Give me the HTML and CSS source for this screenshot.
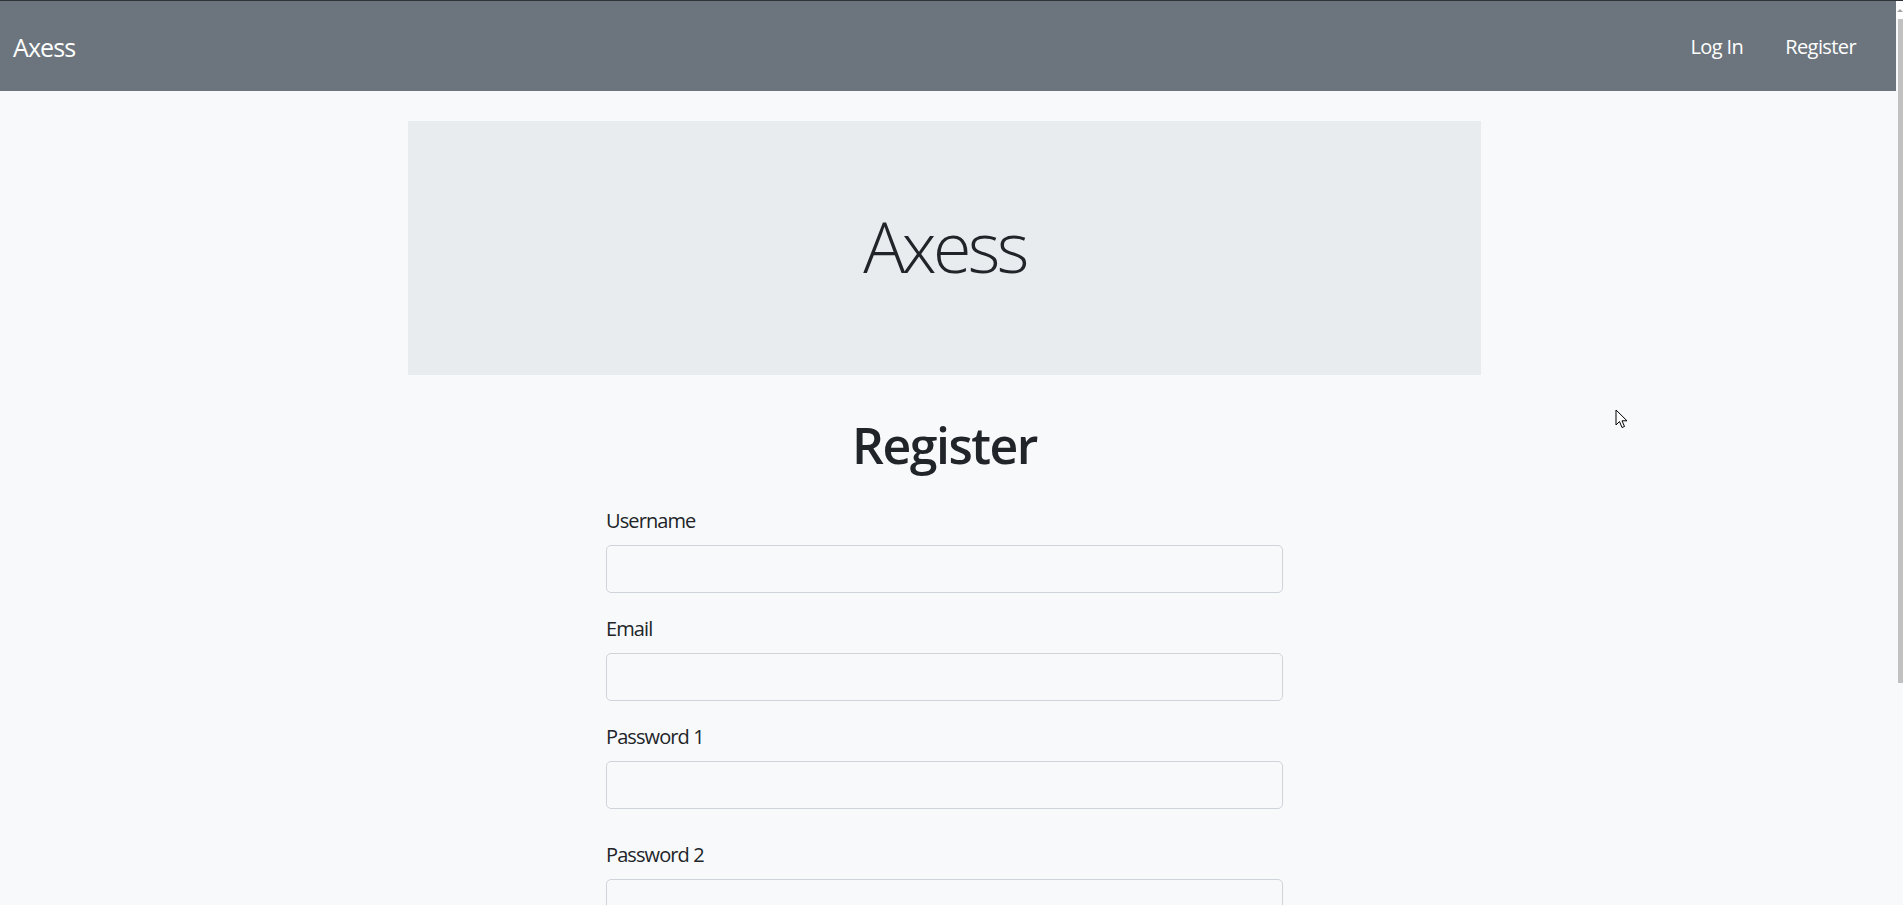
FILE: index.html
```html
<!DOCTYPE html>
<html lang="en">
<head>
<meta charset="utf-8">
<title>Axess - Register</title>
<link rel="stylesheet" href="styles.css">
</head>
<body>
<div class="page">
  <nav class="navbar">
    <a class="brand" href="#">Axess</a>
    <ul class="nav">
      <li><a class="nav-link" href="#">Log In</a></li>
      <li><a class="nav-link" href="#">Register</a></li>
    </ul>
  </nav>
  <main class="main">
    <div class="jumbotron">
      <h1 class="display">Axess</h1>
    </div>
    <section class="register">
      <h1 class="title">Register</h1>
      <form class="form">
        <div class="form-group">
          <label for="username">Username</label>
          <input id="username" class="form-control" type="text">
        </div>
        <div class="form-group">
          <label for="email">Email</label>
          <input id="email" class="form-control" type="email">
        </div>
        <div class="form-group form-group-help">
          <label for="password1">Password 1</label>
          <input id="password1" class="form-control" type="password">
        </div>
        <div class="form-group">
          <label for="password2">Password 2</label>
          <input id="password2" class="form-control" type="password">
        </div>
      </form>
    </section>
    <svg class="cursor" width="14" height="22" viewBox="0 0 14 22" aria-hidden="true">
      <path d="M1 1 L1 16 L4.5 12.5 L7 18.5 L9.5 17.5 L7 11.8 L12 11.8 Z" fill="#fff" stroke="#000" stroke-width="1" stroke-linejoin="miter"/>
    </svg>
  </main>
</div>
<div class="scrollbar">
  <div class="scroll-cap"><span class="scroll-arrow"></span></div>
  <div class="scroll-thumb"></div>
</div>
</body>
</html>
```

FILE: styles.css
```css
html, body {
  margin: 0;
  padding: 0;
}

html {
  height: 905px;
  overflow: hidden;
}

body {
  height: 904px;
  overflow: hidden;
  display: flex;
  border-top: 1px solid #2f3439;
  background: #f8f9fa;
  color: #212529;
  font-family: "Open Sans", "Noto Sans", "Liberation Sans", sans-serif;
}

.page {
  flex: 1;
  min-width: 0;
  display: flex;
  flex-direction: column;
}

.navbar {
  height: 90px;
  flex: none;
  background: #6c757d;
  display: flex;
  align-items: center;
  justify-content: space-between;
  padding: 0 19px 0 13px;
}

.brand {
  color: #fff;
  text-decoration: none;
  font-size: 25px;
  line-height: 37px;
  padding-top: 3px;
  letter-spacing: -0.9px;
}

.nav {
  list-style: none;
  margin: 0;
  padding: 0;
  display: flex;
}

.nav-link {
  display: block;
  color: #fff;
  text-decoration: none;
  font-size: 20px;
  line-height: 30px;
  padding: 2px 21px 0;
  letter-spacing: -0.6px;
}

.main {
  position: relative;
  padding: 30px 7px 0 0;
}

.jumbotron {
  width: 1073px;
  margin: 0 auto;
  background: #e9ecef;
  padding: 83px 0 77px;
  text-align: center;
}

.display {
  margin: 0 0 10px;
  font-size: 70px;
  font-weight: 300;
  line-height: 84px;
  letter-spacing: -3.6px;
}

.register {
  width: 677px;
  margin: 40px auto 0;
}

.title {
  margin: 0 0 30px;
  text-align: center;
  font-size: 50px;
  font-weight: 600;
  line-height: 60px;
  letter-spacing: -1.5px;
}

.form-group {
  margin-bottom: 20px;
}

.form-group-help {
  margin-bottom: 30px;
}

label {
  display: block;
  font-size: 20px;
  line-height: 30px;
  padding-top: 1px;
  margin-bottom: 9px;
  letter-spacing: -0.9px;
}

.form-control {
  display: block;
  box-sizing: border-box;
  width: 100%;
  height: 48px;
  margin: 0;
  padding: 7px 15px;
  border: 1px solid #ced4da;
  border-radius: 5px;
  background: #f8f9fa;
  font: inherit;
  font-size: 20px;
}

.cursor {
  position: absolute;
  left: 1615px;
  top: 318px;
}

.scrollbar {
  width: 7px;
  flex: none;
  display: flex;
  flex-direction: column;
  background: #f8f9fa;
}

.scroll-cap {
  height: 18px;
  background: #fff;
  display: flex;
  justify-content: flex-end;
  align-items: center;
}

.scroll-arrow {
  width: 0;
  height: 0;
  border-left: 3px solid transparent;
  border-right: 3px solid transparent;
  border-bottom: 3px solid #a3a3a3;
}

.scroll-thumb {
  height: 664px;
  margin-left: 2px;
  background: #c1c1c1;
}
```
